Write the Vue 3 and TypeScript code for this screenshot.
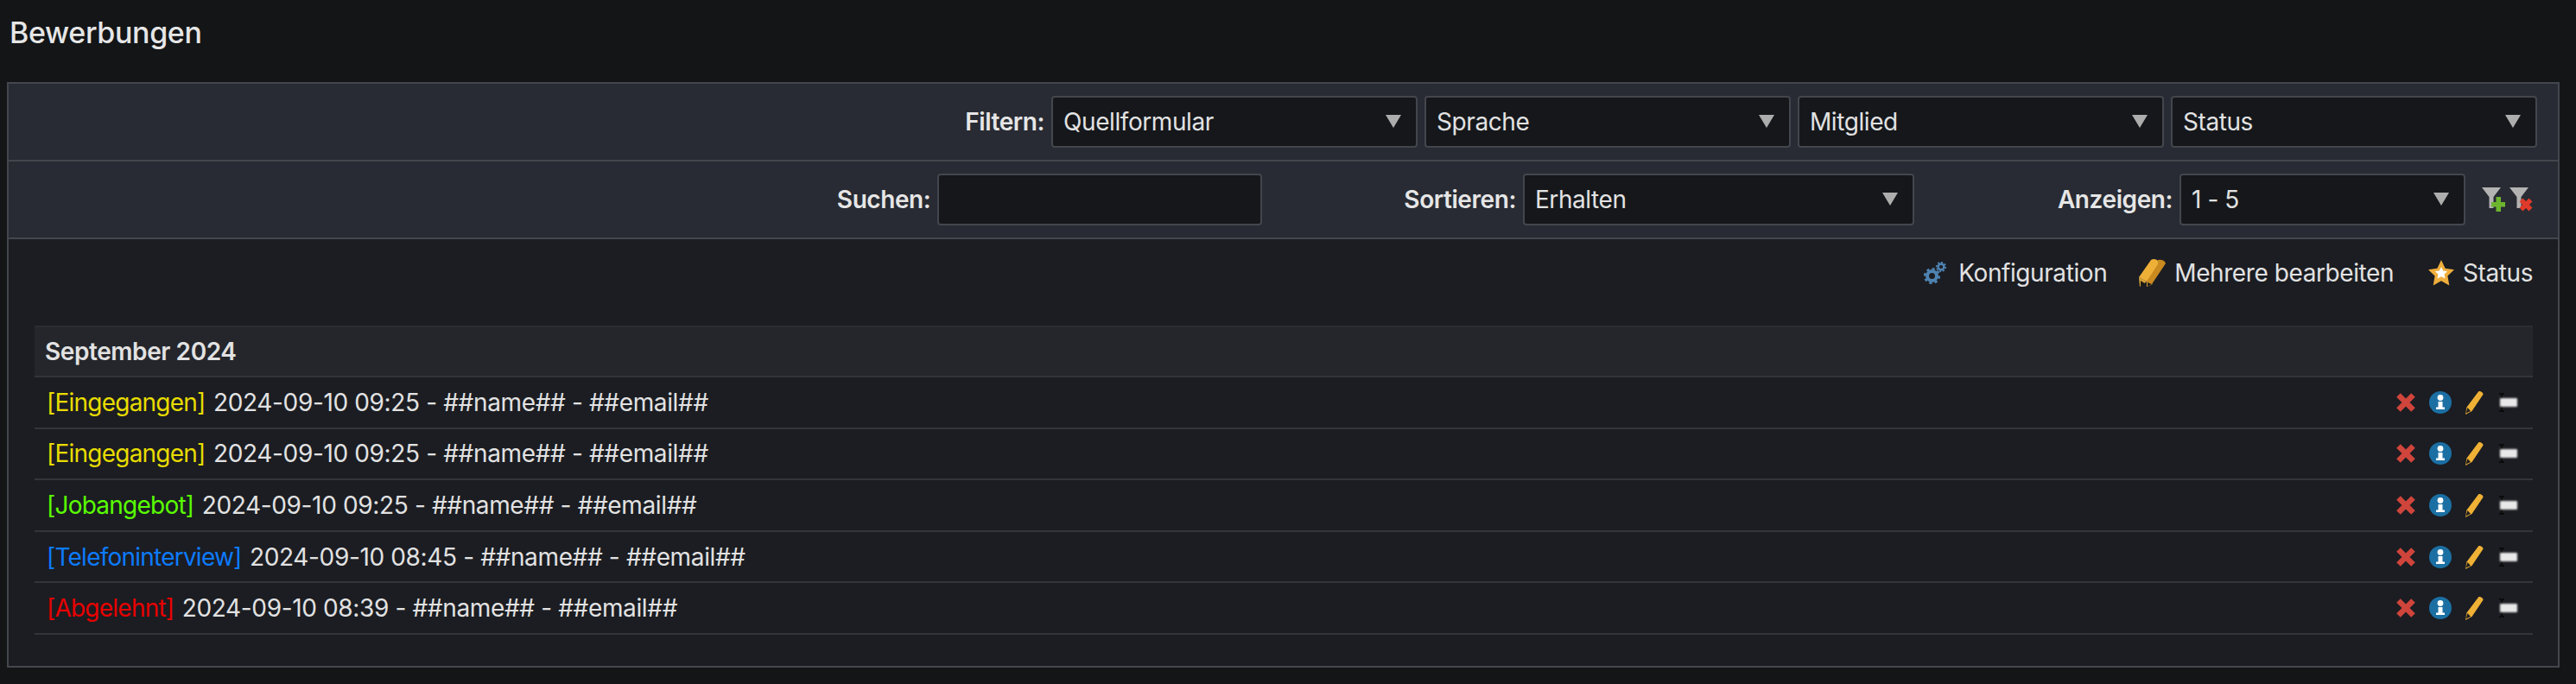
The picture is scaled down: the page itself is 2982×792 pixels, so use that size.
<script setup lang="ts">
interface Application {
  status: string;
  color: string;
  received: string;
}

const filters = ["Quellformular", "Sprache", "Mitglied", "Status"];

const applications: Application[] = [
  { status: "Eingegangen", color: "#e8dc00", received: "2024-09-10 09:25" },
  { status: "Eingegangen", color: "#e8dc00", received: "2024-09-10 09:25" },
  { status: "Jobangebot", color: "#5aff00", received: "2024-09-10 09:25" },
  { status: "Telefoninterview", color: "#0d7bff", received: "2024-09-10 08:45" },
  { status: "Abgelehnt", color: "#e80000", received: "2024-09-10 08:39" },
];
</script>

<template>
  <div class="page">
    <h1 class="title">Bewerbungen</h1>

    <section class="panel">
      <div class="bar">
        <label class="label">Filtern:</label>
        <div class="filters">
          <div v-for="name in filters" :key="name" class="select filter-select">
            <span>{{ name }}</span>
            <i class="caret"></i>
          </div>
        </div>
      </div>

      <div class="bar">
        <label class="label">Suchen:</label>
        <input class="search" type="text" />
        <label class="label sort-label">Sortieren:</label>
        <div class="select sort-select">
          <span>Erhalten</span>
          <i class="caret"></i>
        </div>
        <label class="label show-label">Anzeigen:</label>
        <div class="select show-select">
          <span>1 - 5</span>
          <i class="caret"></i>
        </div>
        <div class="filter-icons">
          <svg width="28" height="29" viewBox="0 0 28 29">
            <path d="M0 0H22L13.5 11V24H8.5V11Z" fill="#b3b3b3" />
            <path d="M16.5 11H22V17H27V22.5H22V28H16.5V22.5H11V17H16.5Z" fill="#6db52e" />
          </svg>
          <svg width="28" height="29" viewBox="0 0 28 29">
            <path d="M0 0H22L13.5 11V24H8.5V11Z" fill="#b3b3b3" />
            <path d="M13.5 14.5L24.5 25.5M24.5 14.5L13.5 25.5" stroke="#e03a2a" stroke-width="5.5" />
          </svg>
        </div>
      </div>

      <div class="content">
        <div class="links">
          <a class="link">
            <svg class="gears" width="26" height="26" viewBox="0 0 26 26">
              <circle cx="9.5" cy="16.5" r="5.5" fill="none" stroke="#4e82b0" stroke-width="4" />
              <circle cx="9.5" cy="16.5" r="8.2" fill="none" stroke="#4e82b0" stroke-width="2.8" pathLength="16" stroke-dasharray="1 1" />
              <circle cx="20" cy="6" r="3.4" fill="none" stroke="#4e82b0" stroke-width="2.6" />
              <circle cx="20" cy="6" r="5.2" fill="none" stroke="#4e82b0" stroke-width="1.9" pathLength="16" stroke-dasharray="1 1" />
            </svg>
            Konfiguration
          </a>
          <a class="link">
            <svg class="pencils" width="34" height="34" viewBox="0 0 34 34">
              <path d="M23 2Q30 1 32 6L16 30L10 27Z" fill="#c98a1f" />
              <path d="M1 22L15 2Q18 0 22 2Q24 4 23 7L10 27Z" fill="#efb038" />
              <path d="M1 22L10 27L2 33Z" fill="#d9a33a" />
              <path d="M10 27L17 30L10 33Z" fill="#d9a33a" />
              <path d="M3 26L8.5 29.5L3 32.5Z" fill="#1c1a14" />
              <path d="M11 28L16 30L11 32.5Z" fill="#1c1a14" />
            </svg>
            Mehrere bearbeiten
          </a>
          <a class="link">
            <svg width="30" height="30" viewBox="0 0 30 30">
              <path d="M15 0L19.6 9.8L30 11.2L22.4 18.6L24.3 29.5L15 24.2L5.7 29.5L7.6 18.6L0 11.2L10.4 9.8Z" fill="#efae3c" />
              <path d="M15 8L17.2 12.6L22.2 13.2L18.5 16.6L19.5 21.6L15 19.2L10.5 21.6L11.5 16.6L7.8 13.2L12.8 12.6Z" fill="#fff" />
            </svg>
            Status
          </a>
        </div>

        <div class="group-head">September 2024</div>
        <div v-for="(item, index) in applications" :key="index" class="row">
          <div class="row-text">
            <span class="status" :style="{ color: item.color }">[{{ item.status }}]</span>
            {{ item.received }} - ##name## - ##email##
          </div>
          <div class="actions">
            <svg width="24" height="24" viewBox="0 0 24 24">
              <path d="M3.5 3.5L20.5 20.5M20.5 3.5L3.5 20.5" stroke="#cf453b" stroke-width="6.5" />
            </svg>
            <svg width="26" height="26" viewBox="0 0 26 26">
              <circle cx="13" cy="13" r="13" fill="#1b6fa3" />
              <circle cx="13" cy="7.5" r="3.4" fill="#fff" />
              <path d="M10.5 12H15.5V18.5H18V21H8V18.5H10.5Z" fill="#fff" />
            </svg>
            <svg width="22" height="28" viewBox="0 0 22 28">
              <path d="M16 1.5C17.5 -.2 22.5 3 21.3 5L8.5 24L1 28L2.5 19.5Z" fill="#efb135" />
              <path d="M3.5 20L7 24L1.5 26.5Z" fill="#1d1d1d" />
            </svg>
            <svg class="minus" width="24" height="26" viewBox="0 0 24 26">
              <defs>
                <filter id="soft" x="-20%" y="-40%" width="140%" height="180%">
                  <feGaussianBlur stdDeviation="0.9" />
                </filter>
              </defs>
              <path d="M1 3H7M4 3V23M1 23H7" stroke="#0b0b0b" stroke-width="2" fill="none" />
              <rect x="2" y="8" width="20" height="10" rx="1" fill="#e8e8e8" filter="url(#soft)" />
            </svg>
          </div>
        </div>
      </div>
    </section>
  </div>
</template>

<style>
html,
body {
  margin: 0;
  background: #131517;
}
</style>

<style scoped>
.page {
  height: 792px;
  overflow: hidden;
  padding: 0 19px 0 8px;
  box-sizing: border-box;
  background: #131517;
  color: #e2e2e2;
  font-family: Inter, "Liberation Sans", sans-serif;
  font-size: 28px;
  letter-spacing: -0.42px;
}

.title {
  margin: 0;
  height: 95px;
  padding: 18px 0 0 3px;
  box-sizing: border-box;
  font-size: 34px;
  font-weight: 500;
  line-height: 40px;
  letter-spacing: -0.35px;
  color: #e6e6e6;
}

.panel {
  height: 678px;
  box-sizing: border-box;
  border: 2px solid #43464d;
  background: #1b1d22;
}

.bar {
  display: flex;
  align-items: center;
  justify-content: flex-end;
  height: 90px;
  box-sizing: border-box;
  padding-right: 24px;
  background: #282b33;
  border-bottom: 2px solid #43464d;
}

.label {
  margin-right: 8px;
  font-weight: 600;
  color: #e6e6e6;
}

.filters {
  display: flex;
  gap: 8px;
}

.select {
  position: relative;
  display: flex;
  align-items: center;
  height: 60px;
  padding-left: 12px;
  box-sizing: border-box;
  background: #15171b;
  border: 2px solid #43464d;
  border-radius: 4px;
}

.filter-select {
  width: 424px;
}

.sort-select {
  width: 453px;
}

.show-select {
  width: 331px;
}

.caret {
  position: absolute;
  right: 17px;
  top: 20px;
  border-top: 15px solid #adadad;
  border-left: 9px solid transparent;
  border-right: 9px solid transparent;
}

.search {
  width: 376px;
  height: 60px;
  box-sizing: border-box;
  background: #15171b;
  border: 2px solid #43464d;
  border-radius: 4px;
  outline: none;
}

.sort-label {
  margin-left: 164px;
}

.show-label {
  margin-left: 166px;
}

.filter-icons {
  display: flex;
  gap: 4px;
  width: 64px;
  margin-left: 19px;
  padding-top: 1px;
}

.content {
  padding: 0 29px 0 30px;
}

.links {
  display: flex;
  justify-content: flex-end;
  align-items: center;
  gap: 40px;
  height: 100px;
  padding-bottom: 22px;
  box-sizing: border-box;
}

.link {
  display: flex;
  align-items: center;
  gap: 10px;
}

.gears {
  margin-right: 4px;
}

.pencils {
  margin-left: -4px;
  margin-right: -2px;
}

.group-head {
  height: 60px;
  box-sizing: border-box;
  padding-left: 12px;
  line-height: 56px;
  font-weight: 600;
  background: #24262b;
  border-top: 2px solid #2b2d32;
  border-bottom: 2px solid #33353a;
}

.row {
  display: flex;
  align-items: center;
  justify-content: space-between;
  height: 59.6px;
  box-sizing: border-box;
  padding: 0 16px 0 14px;
  border-bottom: 2px solid #33353a;
}

.row-text {
  letter-spacing: -0.36px;
}

.status {
  margin-right: 2px;
  letter-spacing: -0.77px;
}

.actions {
  display: flex;
  align-items: center;
  gap: 15px;
}

.minus {
  margin-left: 2px;
}
</style>
